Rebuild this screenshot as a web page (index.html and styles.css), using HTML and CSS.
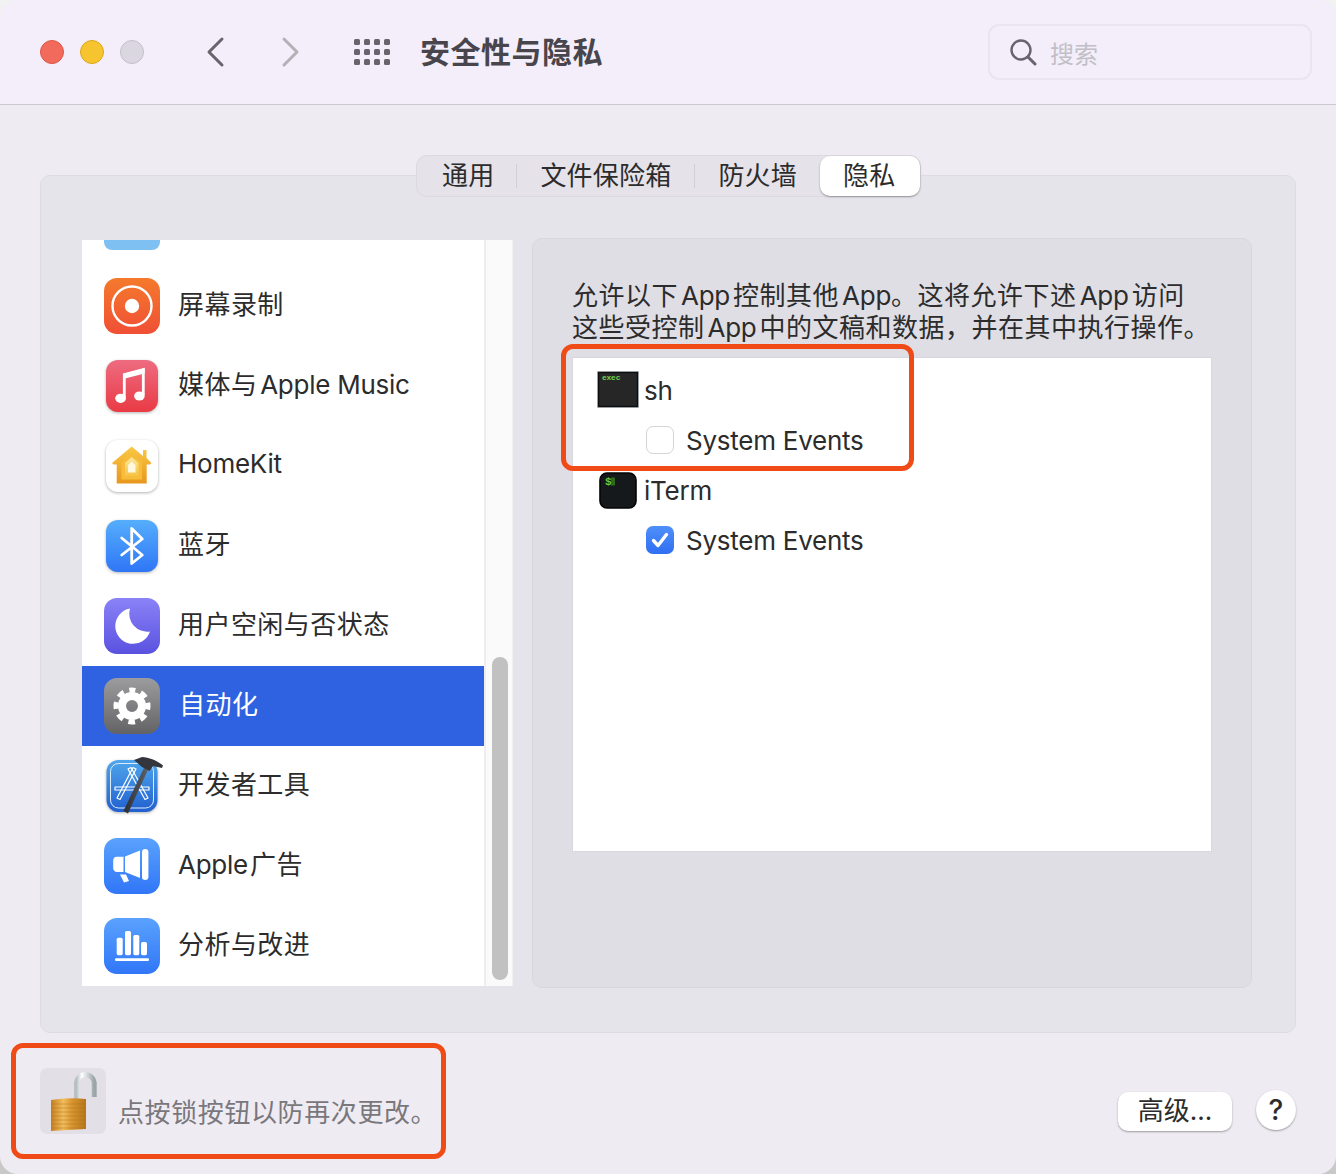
FILE: index.html
```html
<!DOCTYPE html>
<html>

<head>
	<meta charset="UTF-8">
	<title>安全性与隐私</title>
	<link rel="stylesheet" href="styles.css">
</head>

<body>
	<div class="window">
		<div class="titlebar">
			<span class="light red"></span>
			<span class="light yellow"></span>
			<span class="light grey"></span>
			<svg class="nav back" width="20" height="32" viewBox="0 0 20 32"><path d="M17 3 L4 16 L17 29" /></svg>
			<svg class="nav forward" width="20" height="32" viewBox="0 0 20 32"><path d="M3 3 L16 16 L3 29" /></svg>
			<div class="apps">
				<i></i><i></i><i></i><i></i><i></i><i></i><i></i><i></i><i></i><i></i><i></i><i></i>
			</div>
			<div class="title">安全性与隐私</div>
			<div class="search">
				<svg width="28" height="28" viewBox="0 0 28 28"><circle cx="12" cy="12" r="9.5" /><path d="M19 19 L26 26" class="handle" /></svg>
				<span>搜索</span>
			</div>
		</div>

		<div class="content">
			<div class="tabs">
				<div class="tab first">通用</div>
				<div class="sep"></div>
				<div class="tab">文件保险箱</div>
				<div class="sep"></div>
				<div class="tab">防火墙</div>
				<div class="tab active">隐私</div>
			</div>

			<div class="group">
				<div class="list">
					<div class="items">
						<div class="sliver"></div>
						<div class="row">
							<svg class="icon" viewBox="0 0 60 60">
								<defs><linearGradient id="g1" x1="0" y1="0" x2="0" y2="1"><stop offset="0" stop-color="#f47a2c" /><stop offset="1" stop-color="#f04f35" /></linearGradient></defs>
								<rect x="2" y="2" width="56" height="56" rx="13" fill="url(#g1)" />
								<circle cx="30" cy="30" r="19.5" fill="none" stroke="#fff" stroke-width="2.4" />
								<circle cx="30" cy="30" r="7.2" fill="#fff" />
							</svg>
							<span class="label">屏幕录制</span>
						</div>
						<div class="row">
							<svg class="icon" viewBox="0 0 60 60">
								<defs><linearGradient id="g2" x1="0" y1="0" x2="0" y2="1"><stop offset="0" stop-color="#ee6b80" /><stop offset="1" stop-color="#e93b45" /></linearGradient></defs>
								<rect class="shade" x="4" y="4" width="52" height="52" rx="12" fill="url(#g2)" />
								<path d="M22.3 41 V18.5 L41.3 13.5 V39" fill="none" stroke="#fff" stroke-width="2.8" />
								<path d="M21 18 L42.7 12.3 V17.6 L21 23 Z" fill="#fff" />
								<ellipse cx="18.6" cy="42.3" rx="5.4" ry="4.6" fill="#fff" />
								<ellipse cx="37.4" cy="40" rx="5.3" ry="4.6" fill="#fff" />
							</svg>
							<span class="label tight">媒体与 <span class="en">Apple Music</span></span>
						</div>
						<div class="row">
							<svg class="icon" viewBox="0 0 60 60">
								<defs>
									<linearGradient id="g3" x1="0" y1="0" x2="0" y2="1"><stop offset="0" stop-color="#f9c945" /><stop offset="1" stop-color="#e8961e" /></linearGradient>
									<linearGradient id="g3b" x1="0" y1="0" x2="0" y2="1"><stop offset="0" stop-color="#fbe9a0" /><stop offset="1" stop-color="#f6c445" /></linearGradient>
								</defs>
								<rect class="shade" x="4" y="4" width="52" height="52" rx="12" fill="#fff" />
								<path d="M41 14 h3.5 v8 L49.5 27 L48 28.5 H44.7 V47.5 H14.7 V28.5 H11.5 L10 27 L29.7 10.5 L41 20 Z" fill="url(#g3)" />
								<path d="M29.7 17 L40 26 V43.5 H19.5 V26 Z" fill="#f7bd3a" />
								<path d="M29.7 21 L36.5 27 V40 H23 V27 Z" fill="url(#g3b)" />
								<path d="M29.7 25.5 L33.5 29 V36.5 H26 V29 Z" fill="#fff8dc" />
							</svg>
							<span class="label en home">HomeKit</span>
						</div>
						<div class="row">
							<svg class="icon" viewBox="0 0 60 60">
								<defs><linearGradient id="g4" x1="0" y1="0" x2="0" y2="1"><stop offset="0" stop-color="#55aefc" /><stop offset="1" stop-color="#2f76f6" /></linearGradient></defs>
								<rect class="shade" x="4" y="4" width="52" height="52" rx="12" fill="url(#g4)" />
								<path d="M19.7 22 L40.3 39 L29.7 47.5 V12.5 L40.3 23 L19.7 39" fill="none" stroke="#fff" stroke-width="2.8" stroke-linejoin="round" stroke-linecap="round" />
							</svg>
							<span class="label">蓝牙</span>
						</div>
						<div class="row">
							<svg class="icon" viewBox="0 0 60 60">
								<defs><linearGradient id="g5" x1="0" y1="0" x2="0" y2="1"><stop offset="0" stop-color="#8a82f6" /><stop offset="1" stop-color="#5a52e0" /></linearGradient></defs>
								<rect x="2" y="2" width="56" height="56" rx="13" fill="url(#g5)" />
								<path d="M28 12.5 A17.8 17.8 0 1 0 48 35.5 A 18 18 0 0 1 28 12.5 Z" fill="#fff" />
							</svg>
							<span class="label">用户空闲与否状态</span>
						</div>
						<div class="row selected">
							<svg class="icon" viewBox="0 0 60 60">
								<defs><linearGradient id="g6" x1="0" y1="0" x2="0" y2="1"><stop offset="0" stop-color="#9c9c9f" /><stop offset="1" stop-color="#636366" /></linearGradient></defs>
								<rect x="2" y="2" width="56" height="56" rx="13" fill="url(#g6)" />
								<circle cx="30" cy="30" r="10" fill="none" stroke="#fff" stroke-width="8" />
								<circle cx="30" cy="30" r="16" fill="none" stroke="#fff" stroke-width="5" stroke-dasharray="6.8 5.766" stroke-dashoffset="3.4" transform="rotate(-90 30 30)" />
							</svg>
							<span class="label">自动化</span>
						</div>
						<div class="row">
							<svg class="icon" viewBox="0 0 60 60">
								<defs>
									<linearGradient id="g7" x1="0" y1="0" x2="0" y2="1"><stop offset="0" stop-color="#4fa6ec" /><stop offset="1" stop-color="#2160cf" /></linearGradient>
									<linearGradient id="g7b" x1="0" y1="0" x2="1" y2="0"><stop offset="0" stop-color="#2a2d33" /><stop offset="1" stop-color="#5c6068" /></linearGradient>
								</defs>
								<rect class="shade" x="4.5" y="4" width="51" height="52" rx="12" fill="url(#g7)" />
								<rect x="8.5" y="7.5" width="43" height="44.5" rx="8" fill="none" stroke="#dcecfb" stroke-width="1" />
								<g fill="none" stroke="#fff" stroke-width="1.2" stroke-linejoin="round">
									<path d="M26 13 L29 11.5 L46 42 L43 43.5 Z" />
									<path d="M34 13 L31 11.5 L15 42 L18 43.5 Z" />
									<path d="M13 31 H47 V34 H13 Z" />
								</g>
								<path d="M21.5 55 L42 12 L46 13.8 L26 57.5 Z" fill="url(#g7b)" />
								<path d="M32 4 L40 1 C48 1.5 56 5 61 9.5 L60 12 L51 10 L47.5 15 L40 11 Z" fill="#33363c" />
							</svg>
							<span class="label">开发者工具</span>
						</div>
						<div class="row">
							<svg class="icon" viewBox="0 0 60 60">
								<defs><linearGradient id="g8" x1="0" y1="0" x2="0" y2="1"><stop offset="0" stop-color="#5aa2fd" /><stop offset="1" stop-color="#3076f8" /></linearGradient></defs>
								<rect x="2" y="2" width="56" height="56" rx="13" fill="url(#g8)" />
								<path d="M15 20.7 H21.5 V36 H15 A3.8 3.8 0 0 1 11.2 32 V24.5 A3.8 3.8 0 0 1 15 20.7 Z" fill="#fff" />
								<path d="M23 20.5 L38 14.5 V42 L23 36 Z" fill="#fff" />
								<rect x="40" y="13" width="6.4" height="31" rx="3.2" fill="#fff" />
								<path d="M18 38.5 L24 38.5 L27 45 L22 46.5 Z" fill="#fff" />
							</svg>
							<span class="label"><span class="en apple">Apple</span>广告</span>
						</div>
						<div class="row">
							<svg class="icon" viewBox="0 0 60 60">
								<rect x="2" y="2" width="56" height="56" rx="13" fill="url(#g8)" />
								<rect x="14.7" y="21.7" width="6" height="17.5" rx="1.6" fill="#fff" />
								<rect x="23" y="15" width="6" height="24.2" rx="1.6" fill="#fff" />
								<rect x="31.3" y="19" width="6" height="20.2" rx="1.6" fill="#fff" />
								<rect x="39" y="26" width="6" height="13.2" rx="1.6" fill="#fff" />
								<rect x="13" y="42.3" width="34" height="2.7" rx="1.3" fill="#fff" />
							</svg>
							<span class="label">分析与改进</span>
						</div>
					</div>
					<div class="scroll"><div class="thumb"></div></div>
				</div>

				<div class="panel">
					<p class="intro">允许以下 <span class="en">App</span> 控制其他 <span class="en">App</span>。这将允许下述 <span class="en">App</span> 访问<br>这些受控制 <span class="en">App</span> 中的文稿和数据，并在其中执行操作。</p>
					<div class="tree">
						<div class="app">
							<svg class="appicon" viewBox="0 0 44 40">
								<rect x="1.5" y="1.5" width="41" height="36" fill="#262626" stroke="#bcc4c8" stroke-width="1" />
								<rect x="2.5" y="2.5" width="39" height="34" fill="none" stroke="#0e0e0e" stroke-width="1.4" />
								<text class="exec" x="6" y="10">exec</text>
							</svg>
							<span>sh</span>
						</div>
						<div class="sub"><span class="check"></span><span>System Events</span></div>
						<div class="app">
							<svg class="appicon" viewBox="0 0 44 40">
								<rect x="4" y="3" width="36" height="35" rx="7" fill="#15191b" stroke="#050505" stroke-width="1.6" />
								<text class="dollar" x="9" y="15">$</text>
								<rect x="15" y="7.5" width="4" height="8" fill="#2e6b18" />
							</svg>
							<span>iTerm</span>
						</div>
						<div class="sub">
							<span class="check on">
								<svg width="28" height="28" viewBox="0 0 28 28"><path d="M7.5 14.5 L12 19.5 L20.5 8.5" /></svg>
							</span>
							<span>System Events</span>
						</div>
					</div>
				</div>
			</div>

			<div class="footer">
				<div class="lock">
					<svg width="66" height="66" viewBox="0 0 66 66">
						<defs>
							<linearGradient id="gold" x1="0" y1="0" x2="1" y2="0"><stop offset="0" stop-color="#c47f1f" /><stop offset=".35" stop-color="#f2bd5c" /><stop offset=".6" stop-color="#d8952f" /><stop offset="1" stop-color="#b8761c" /></linearGradient>
							<linearGradient id="steel" x1="0" y1="0" x2="1" y2="0"><stop offset="0" stop-color="#b8c0c4" /><stop offset=".3" stop-color="#ffffff" /><stop offset="1" stop-color="#9aa4a9" /></linearGradient>
						</defs>
						<path d="M36.5 32 V14.5 A8.9 8.9 0 0 1 54.2 14.5 V29" fill="none" stroke="url(#steel)" stroke-width="5" />
						<path d="M11 32 Q28 29 46 31 V61 Q28 62 11 63 Z" fill="url(#gold)" />
						<g stroke="#a86c1c" stroke-width="1" opacity=".4">
							<path d="M11 36 H46 M11 40 H46 M11 44 H46 M11 48 H46 M11 52 H46 M11 56 H46 M11 60 H46" />
						</g>
					</svg>
				</div>
				<div class="locktext">点按锁按钮以防再次更改。</div>
				<div class="buttons">
					<div class="btn">高级...</div>
					<div class="help">?</div>
				</div>
			</div>
		</div>

		<div class="mark mark-tree"></div>
		<div class="mark mark-lock"></div>
	</div>
</body>

</html>
```
FILE: styles.css
```css
html,
body {
	margin: 0;
	padding: 0;
}

body {
	background: linear-gradient(#f2f2f2, #c9c9c9);
	font-family: Inter, "Noto Sans CJK SC", sans-serif;
	font-size: 26px;
	color: #2c2c2c;
}

.window {
	position: relative;
	height: 1174px;
	background: #efebf3;
	border-radius: 18px;
	overflow: hidden;
}

.titlebar {
	display: flex;
	align-items: center;
	height: 105px;
	padding: 0 24px 0 40px;
	box-sizing: border-box;
	background: #f3eefa;
	border-bottom: 1px solid #cdc9d1;
}

.light {
	width: 24px;
	height: 24px;
	margin-right: 16px;
	border-radius: 50%;
	box-sizing: border-box;
	border: 1px solid transparent;
}

.red {
	background: #f26a5c;
	border-color: #dc5548;
}

.yellow {
	background: #f6c42f;
	border-color: #dca71e;
}

.grey {
	background: #dbd7e0;
	border-color: #c4c0ca;
}

.nav {
	fill: none;
	stroke-width: 3;
	stroke-linecap: round;
	stroke-linejoin: round;
}

.back {
	margin-left: 45px;
	stroke: #67646c;
}

.forward {
	margin-left: 56px;
	stroke: #b3b0b8;
}

.apps {
	display: grid;
	grid-template-columns: repeat(4, 6px);
	grid-auto-rows: 6px;
	gap: 4px;
	margin-left: 53px;
}

.apps i {
	background: #67646c;
	border-radius: 1.5px;
}

.title {
	margin-left: 30px;
	margin-bottom: 4px;
	font-size: 30px;
	font-weight: 700;
	letter-spacing: 0.5px;
	color: #48464c;
}

.search {
	display: flex;
	align-items: center;
	gap: 13px;
	width: 324px;
	height: 56px;
	margin-left: auto;
	padding-left: 19px;
	box-sizing: border-box;
	border: 2px solid #e9e5ee;
	border-radius: 11px;
	font-size: 24px;
	color: #c2bec7;
}

.search svg {
	fill: none;
	stroke: #67646c;
	stroke-width: 2.4;
}

.search .handle {
	stroke-width: 3;
	stroke-linecap: round;
}

.content {
	padding: 50px 40px 0;
}

.tabs {
	position: relative;
	z-index: 1;
	display: flex;
	align-items: center;
	width: max-content;
	height: 42px;
	margin: 0 0 0 376px;
	box-sizing: border-box;
	background: #e5e2e9;
	border: 1px solid #dcd9e0;
	border-radius: 11px;
	letter-spacing: 0.2px;
}

.tab {
	padding: 0 23px;
	line-height: 40px;
}

.tab.first {
	padding: 0 22px 0 25px;
}

.tab.active {
	height: 40px;
	padding-right: 25px;
	background: #fff;
	border-radius: 10px;
	box-shadow: 0 1px 2px rgba(0, 0, 0, 0.35);
}

.sep {
	width: 1px;
	height: 24px;
	background: #d2cfd6;
}

.group {
	display: flex;
	gap: 19px;
	height: 858px;
	margin-top: -22px;
	padding: 62px 43px 0 41px;
	box-sizing: border-box;
	background: #e6e4eb;
	border: 1px solid #dedce3;
	border-radius: 10px;
}

.list {
	display: flex;
	width: 431px;
	height: 746px;
	margin-top: 2px;
	background: #fff;
	overflow: hidden;
}

.items {
	width: 402px;
}

.sliver {
	width: 56px;
	height: 10px;
	margin: 0 0 16px 22px;
	background: #7fc0f2;
	border-radius: 0 0 8px 8px;
}

.row {
	display: flex;
	align-items: center;
	gap: 16px;
	height: 80px;
	padding-left: 20px;
}

.label {
	margin-bottom: 8px;
	white-space: nowrap;
	letter-spacing: 0.45px;
}

.label.tight {
	word-spacing: -5px;
}

.label.home {
	margin-bottom: 6px;
}

.en {
	letter-spacing: -0.25px;
	word-spacing: 0;
}

.en.apple {
	margin-right: 2px;
}

.row.selected {
	background: #2f62e0;
	color: #fff;
}

.row.selected .label {
	margin-left: 1px;
}

.icon {
	width: 60px;
	height: 60px;
	overflow: visible;
}

.shade {
	filter: drop-shadow(0 1px 1.5px rgba(0, 0, 0, 0.3));
}

.scroll {
	flex: 1;
	padding-top: 417px;
	background: #fafafa;
	border-left: 2px solid #eeeeee;
	border-right: 1px solid #f0f0f0;
	box-sizing: border-box;
}

.thumb {
	width: 16px;
	height: 323px;
	margin-left: 6px;
	background: #c1c1c1;
	border-radius: 8px;
}

.panel {
	width: 720px;
	height: 750px;
	padding: 0 39px;
	box-sizing: border-box;
	background: #e0dee5;
	border: 1px solid #d9d7de;
	border-radius: 10px;
}

.intro {
	margin: 41px 0 13px;
	line-height: 32px;
	letter-spacing: 0.5px;
	word-spacing: -4.8px;
	white-space: nowrap;
}

.tree {
	height: 495px;
	padding-top: 7px;
	box-sizing: border-box;
	background: #fff;
	border: 1px solid #d9d7de;
	letter-spacing: -0.25px;
}

.app,
.sub {
	display: flex;
	align-items: center;
	height: 50px;
}

.app {
	gap: 4px;
	padding-left: 23px;
}

.sub {
	gap: 12px;
	padding-left: 73px;
}

.appicon {
	width: 44px;
	height: 40px;
}

.exec {
	font-family: "Liberation Mono", monospace;
	font-size: 8px;
	font-weight: bold;
	fill: #6fd14f;
}

.dollar {
	font-family: "Liberation Mono", monospace;
	font-size: 11px;
	font-weight: bold;
	fill: #63c83f;
}

.check {
	width: 28px;
	height: 28px;
	box-sizing: border-box;
	background: #fff;
	border: 1px solid #d4d4d4;
	border-radius: 7px;
}

.check.on {
	background: linear-gradient(#4f8ffa, #2f6ff2);
	border: none;
}

.check svg {
	display: block;
	fill: none;
	stroke: #fff;
	stroke-width: 3.4;
	stroke-linecap: round;
	stroke-linejoin: round;
}

.footer {
	display: flex;
	padding-top: 35px;
}

.lock {
	width: 66px;
	height: 66px;
	background: #e2dfe7;
	border-radius: 7px;
}

.lock svg {
	display: block;
}

.locktext {
	align-self: flex-end;
	margin: 0 0 3px 12px;
	line-height: 36px;
	letter-spacing: 0.6px;
	color: #79777c;
}

.buttons {
	display: flex;
	gap: 24px;
	margin-left: auto;
	margin-top: 22px;
}

.btn {
	width: 114px;
	height: 39px;
	margin-top: 2px;
	background: #fff;
	border-radius: 10px;
	box-shadow: 0 1px 2px rgba(0, 0, 0, 0.35);
	text-align: center;
	line-height: 38px;
}

.help {
	width: 40px;
	height: 40px;
	background: #fff;
	border-radius: 50%;
	box-shadow: 0 1px 2px rgba(0, 0, 0, 0.35);
	text-align: center;
	line-height: 40px;
	font-weight: 500;
	font-size: 28px;
}

.mark {
	position: absolute;
	box-sizing: border-box;
	border: 5px solid #f04a17;
	border-radius: 12px;
}

.mark-tree {
	left: 561px;
	top: 344px;
	width: 353px;
	height: 127px;
}

.mark-lock {
	left: 11px;
	top: 1043px;
	width: 435px;
	height: 116px;
}
```
